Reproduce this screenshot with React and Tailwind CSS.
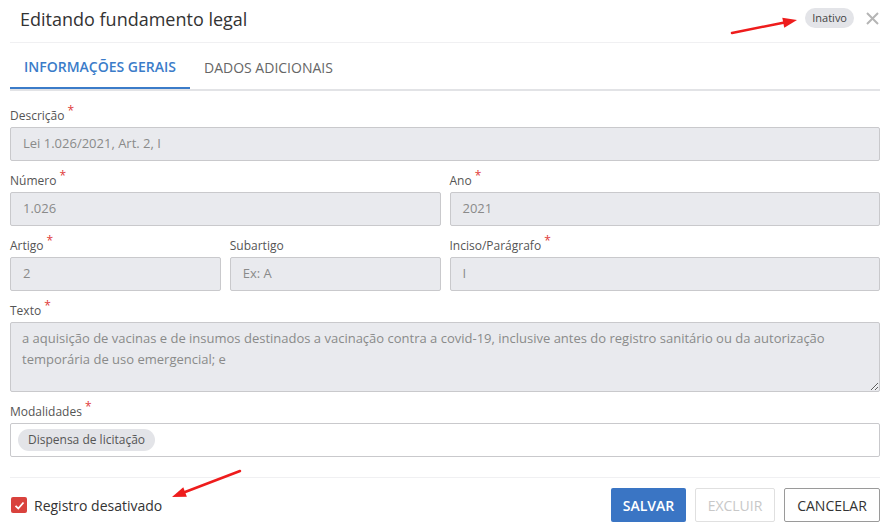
import React from 'react';

const font = { fontFamily: '"Open Sans", "Liberation Sans", sans-serif' };

function Label({ children, required }) {
  return (
    <div className="text-[12px] leading-[16px] text-[#555] mb-[3px] flex items-start">
      <span>{children}</span>
      {required && <span className="text-[#e03a3a] text-[12px] leading-[12px] ml-[3px] -mt-[3px]">*</span>}
    </div>
  );
}

function Field({ label, required, value, placeholder }) {
  return (
    <div className="flex flex-col">
      <Label required={required}>{label}</Label>
      <div className="h-[34px] bg-[#e9eaee] border border-[#c9c9cc] rounded-[2px] px-[12px] flex items-center text-[13px] text-[#8a8a8a]">
        {value || placeholder}
      </div>
    </div>
  );
}

function Arrow({ className, x1, y1, x2, y2 }) {
  const ang = Math.atan2(y2 - y1, x2 - x1);
  const len = 14;
  const w = 5;
  const bx = x2 - len * Math.cos(ang);
  const by = y2 - len * Math.sin(ang);
  const p1 = `${bx + w * Math.sin(ang)},${by - w * Math.cos(ang)}`;
  const p2 = `${bx - w * Math.sin(ang)},${by + w * Math.cos(ang)}`;
  return (
    <svg className={className} width="890" height="529" viewBox="0 0 890 529">
      <line x1={x1} y1={y1} x2={bx} y2={by} stroke="#ee1c1c" strokeWidth="2.5" strokeLinecap="round" />
      <polygon points={`${x2},${y2} ${p1} ${p2}`} fill="#ee1c1c" />
    </svg>
  );
}

export default function App() {
  return (
    <div className="relative w-[890px] h-[529px] bg-white overflow-hidden" style={font}>
      {/* header */}
      <div className="mx-[10px] h-[43px] border-b border-[#f0f0f2] flex items-center justify-between">
        <h1 className="ml-[10px] text-[18px] text-[#333] font-normal leading-none -mt-[5px]">Editando fundamento legal</h1>
        <div className="flex items-center -mt-[6px]">
          <span className="h-[20px] px-[7px] rounded-full bg-[#e3e4e8] text-[11px] text-[#444] flex items-center">Inativo</span>
          <svg className="ml-[11px]" width="15" height="15" viewBox="0 0 15 15">
            <path d="M2 2 L13 13 M13 2 L2 13" stroke="#b5b5b5" strokeWidth="2" />
          </svg>
        </div>
      </div>

      {/* tabs */}
      <div className="mx-[10px] mt-[2px] flex border-b-2 border-[#e2e3e6]">
        <div className="w-[180px] h-[44px] flex items-center justify-center text-[14px] font-semibold text-[#3b7cc9] border-b-2 border-[#3b7cc9] -mb-[2px]">
          INFORMAÇÕES GERAIS
        </div>
        <div className="h-[44px] flex items-center px-[14px] text-[14px] text-[#666]">DADOS ADICIONAIS</div>
      </div>

      {/* form */}
      <div className="mx-[10px] mt-[17px] flex flex-col gap-[12px]">
        <Field label="Descrição" required value="Lei 1.026/2021, Art. 2, I" />
        <div className="grid grid-cols-2 gap-[9px]">
          <Field label="Número" required value="1.026" />
          <Field label="Ano" required value="2021" />
        </div>
        <div className="grid grid-cols-4 gap-[9px]">
          <Field label="Artigo" required value="2" />
          <Field label="Subartigo" placeholder="Ex: A" />
          <div className="col-span-2">
            <Field label="Inciso/Parágrafo" required value="I" />
          </div>
        </div>
        <div className="flex flex-col">
          <Label required>Texto</Label>
          <textarea
            readOnly
            className="h-[70px] bg-[#e9eaee] border border-[#c9c9cc] rounded-[2px] px-[11px] py-[5px] text-[13px] leading-[21px] text-[#8a8a8a] resize-y outline-none"
            style={font}
            value="a aquisição de vacinas e de insumos destinados a vacinação contra a covid-19, inclusive antes do registro sanitário ou da autorização temporária de uso emergencial; e"
          />
        </div>
        <div className="flex flex-col">
          <Label required>Modalidades</Label>
          <div className="h-[34px] bg-white border border-[#c9c9cc] rounded-[2px] px-[7px] flex items-center">
            <span className="h-[22px] px-[10px] rounded-full bg-[#e3e4e8] text-[12px] text-[#555] flex items-center">Dispensa de licitação</span>
          </div>
        </div>
      </div>

      {/* footer */}
      <div className="mx-[10px] mt-[20px] border-t border-[#f0f0f2] pt-[10px] flex items-center justify-between">
        <label className="flex items-center">
          <span className="w-[16px] h-[16px] ml-[1px] rounded-[2px] bg-[#d9423d] flex items-center justify-center">
            <svg width="11" height="11" viewBox="0 0 11 11">
              <path d="M1.5 5.8 L4.3 8.5 L9.5 2.5" stroke="white" strokeWidth="1.8" fill="none" />
            </svg>
          </span>
          <span className="ml-[7px] text-[14px] text-[#333]">Registro desativado</span>
        </label>
        <div className="flex gap-[9px]">
          <button className="h-[34px] w-[75px] rounded-[2px] bg-[#3a75c4] text-white text-[14px] font-semibold">SALVAR</button>
          <button className="h-[34px] w-[80px] rounded-[2px] border border-[#e0e0e0] bg-white text-[#c8c8c8] text-[14px]">EXCLUIR</button>
          <button className="h-[34px] w-[96px] rounded-[2px] border border-[#9a9a9a] bg-white text-[#333] text-[14px]">CANCELAR</button>
        </div>
      </div>

      <Arrow className="absolute inset-0 pointer-events-none" x1={732} y1={33} x2={797} y2={20} />
      <Arrow className="absolute inset-0 pointer-events-none" x1={240} y1={471} x2={172} y2={497} />
    </div>
  );
}
